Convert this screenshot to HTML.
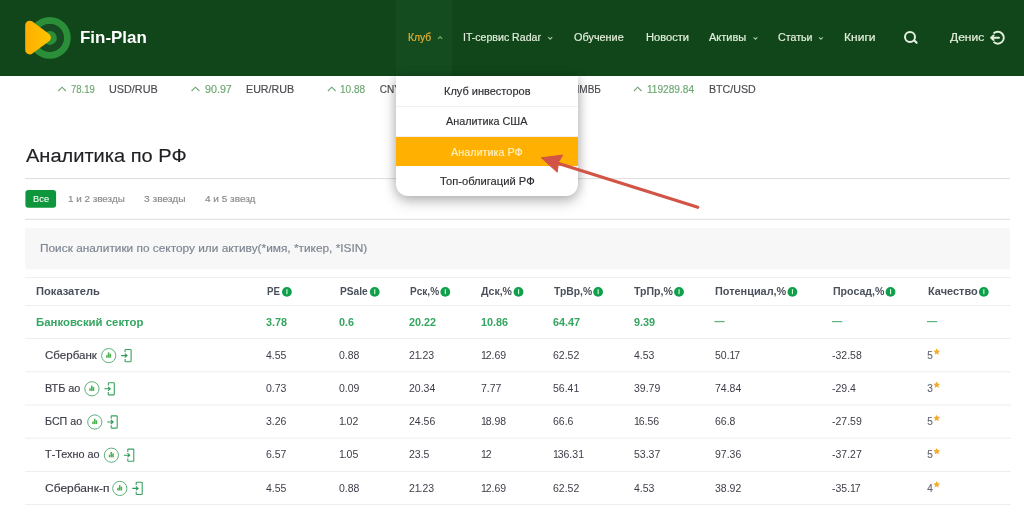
<!DOCTYPE html>
<html><head><meta charset="utf-8"><style>
html,body{margin:0;padding:0;width:1024px;height:514px;overflow:hidden;background:#fff}
body{position:relative;font-family:"Liberation Sans",sans-serif}
.tx{position:absolute;white-space:nowrap;transform-origin:0 0}
#hdr{position:absolute;left:0;top:0;width:1024px;height:76px;background:#11461a}
#hov{position:absolute;left:396px;top:0;width:56px;height:76px;background:#144c20}
#dd{position:absolute;left:396px;top:76px;width:182px;height:120px;background:#fff;border-radius:0 0 12px 12px;box-shadow:0 0 12px rgba(0,0,0,.2),0 6px 14px rgba(0,0,0,.22);z-index:5;overflow:hidden}
#dd .sep{position:absolute;left:0;width:182px;height:1px;background:#f1f1f1}
#dd .or{position:absolute;left:0;top:60.6px;width:182px;height:29.2px;background:#ffb000}
#ddt{position:absolute;left:0;top:0;width:1024px;height:514px;z-index:6;will-change:transform}
svg{position:absolute;left:0;top:0}
#mt{position:absolute;left:0;top:0;width:1024px;height:514px;will-change:transform}
</style></head><body>
<div id="hdr"></div><div id="hov"></div>
<svg width="1024" height="514" viewBox="0 0 1024 514">
<circle cx="49.8" cy="37.9" r="17.4" fill="none" stroke="#2b8f3a" stroke-width="7"/>
<circle cx="49.8" cy="37.9" r="14" fill="#174b21"/>
<circle cx="49.8" cy="37.9" r="7" fill="#2b8f3a"/>
<defs><linearGradient id="lg" gradientUnits="userSpaceOnUse" x1="25" y1="0" x2="51" y2="0"><stop offset="0" stop-color="#ffae00"/><stop offset="1" stop-color="#ffc400"/></linearGradient></defs>
<path d="M29.7 25.2 L46.4 37.6 L29.7 49.9 Z" fill="url(#lg)" stroke="url(#lg)" stroke-width="9" stroke-linejoin="round"/>
<path d="M438.0 38.9 L440.1 36.8 L442.2 38.9" fill="none" stroke="#7fae6a" stroke-width="1.15"/>
<path d="M548.2 37.2 L550.2 39.2 L552.2 37.2" fill="none" stroke="#a8c8a0" stroke-width="1.15"/>
<path d="M753.6 37.3 L755.5 39.2 L757.4 37.3" fill="none" stroke="#a8c8a0" stroke-width="1.1"/>
<path d="M819.0 37.3 L820.9 39.2 L822.8 37.3" fill="none" stroke="#a8c8a0" stroke-width="1.1"/>
<circle cx="910" cy="36.9" r="5" fill="none" stroke="#e4f0de" stroke-width="2"/><path d="M914.6 40.7 L916.6 42.8" stroke="#e4f0de" stroke-width="2.1" stroke-linecap="round"/>
<path d="M993.56 33.46 A6 6 0 1 1 993.56 41.94" fill="none" stroke="#e4f0de" stroke-width="1.9"/><path d="M999 37.7 H991.4 M993.6 35.4 L991.1 37.7 L993.6 40.0" fill="none" stroke="#e4f0de" stroke-width="1.9" stroke-linecap="round" stroke-linejoin="round"/>
<path d="M58.3 91.0 L62.05 87.2 L65.8 91.0" fill="none" stroke="#6ea672" stroke-width="1.1"/>
<path d="M191.6 91.0 L195.45 87.2 L199.29999999999998 91.0" fill="none" stroke="#6ea672" stroke-width="1.1"/>
<path d="M327.9 91.0 L331.75 87.2 L335.6 91.0" fill="none" stroke="#6ea672" stroke-width="1.1"/>
<path d="M633.9 91.0 L637.7 87.2 L641.5 91.0" fill="none" stroke="#6ea672" stroke-width="1.1"/>
<rect x="25" y="178.1" width="985" height="1" fill="#dddddd"/>
<rect x="25" y="218.8" width="985" height="1" fill="#dddddd"/>
<rect x="25" y="277.1" width="986" height="1" fill="#eeeeee"/>
<rect x="25" y="305.0" width="986" height="1" fill="#eeeeee"/>
<rect x="25" y="338.1" width="986" height="1" fill="#eeeeee"/>
<rect x="25" y="371.3" width="986" height="1" fill="#eeeeee"/>
<rect x="25" y="404.5" width="986" height="1" fill="#eeeeee"/>
<rect x="25" y="437.7" width="986" height="1" fill="#eeeeee"/>
<rect x="25" y="470.9" width="986" height="1" fill="#eeeeee"/>
<rect x="25" y="504.1" width="986" height="1" fill="#eeeeee"/>
<rect x="714.4" y="321.1" width="10.2" height="1.1" fill="#4aad72"/>
<rect x="832.0" y="321.1" width="10.2" height="1.1" fill="#4aad72"/>
<rect x="927.0" y="321.1" width="10.2" height="1.1" fill="#4aad72"/>
<rect x="25.4" y="189.9" width="30.7" height="17.8" rx="3" fill="#0e963d"/>
<rect x="25" y="228" width="985" height="41.5" rx="2" fill="#f7f7f7"/>
<circle cx="286.9" cy="291.9" r="4.9" fill="#10a04c"/><rect x="286.4" y="289.2" width="1.1" height="4.9" fill="#d8f8e2"/>
<circle cx="374.7" cy="291.9" r="4.9" fill="#10a04c"/><rect x="374.2" y="289.2" width="1.1" height="4.9" fill="#d8f8e2"/>
<circle cx="445.3" cy="291.9" r="4.9" fill="#10a04c"/><rect x="444.8" y="289.2" width="1.1" height="4.9" fill="#d8f8e2"/>
<circle cx="518.5" cy="291.9" r="4.9" fill="#10a04c"/><rect x="518.0" y="289.2" width="1.1" height="4.9" fill="#d8f8e2"/>
<circle cx="598.1" cy="291.9" r="4.9" fill="#10a04c"/><rect x="597.6" y="289.2" width="1.1" height="4.9" fill="#d8f8e2"/>
<circle cx="679.0" cy="291.9" r="4.9" fill="#10a04c"/><rect x="678.5" y="289.2" width="1.1" height="4.9" fill="#d8f8e2"/>
<circle cx="792.4" cy="291.9" r="4.9" fill="#10a04c"/><rect x="791.9" y="289.2" width="1.1" height="4.9" fill="#d8f8e2"/>
<circle cx="890.5" cy="291.9" r="4.9" fill="#10a04c"/><rect x="890.0" y="289.2" width="1.1" height="4.9" fill="#d8f8e2"/>
<circle cx="983.8" cy="291.9" r="4.9" fill="#10a04c"/><rect x="983.3" y="289.2" width="1.1" height="4.9" fill="#d8f8e2"/>
<circle cx="108.7" cy="355.6" r="7.1" fill="none" stroke="#5cb07c" stroke-width="1"/><rect x="106.10000000000001" y="355.1" width="1.5" height="2.6" fill="#4caf50"/><rect x="107.8" y="352.40000000000003" width="1.6" height="5.3" fill="#4caf50"/><rect x="109.5" y="353.90000000000003" width="1.6" height="3.8" fill="#4caf50"/><path d="M125.10000000000001 352.3 V350.0 Q125.10000000000001 349.5 125.7 349.5 H130.5 Q131.10000000000002 349.5 131.10000000000002 350.1 V361.1 Q131.10000000000002 361.70000000000005 130.5 361.70000000000005 H125.7 Q125.10000000000001 361.70000000000005 125.10000000000001 361.20000000000005 V358.90000000000003" fill="none" stroke="#3aa060" stroke-width="1.1"/><path d="M121.2 355.6 H126.8 M124.8 353.6 L127.0 355.6 L124.8 357.6" fill="none" stroke="#2e9a58" stroke-width="1.1"/>
<circle cx="91.9" cy="388.8" r="7.1" fill="none" stroke="#5cb07c" stroke-width="1"/><rect x="89.30000000000001" y="388.3" width="1.5" height="2.6" fill="#4caf50"/><rect x="91.0" y="385.6" width="1.6" height="5.3" fill="#4caf50"/><rect x="92.7" y="387.1" width="1.6" height="3.8" fill="#4caf50"/><path d="M108.30000000000001 385.5 V383.2 Q108.30000000000001 382.7 108.9 382.7 H113.70000000000002 Q114.30000000000001 382.7 114.30000000000001 383.3 V394.3 Q114.30000000000001 394.90000000000003 113.70000000000002 394.90000000000003 H108.9 Q108.30000000000001 394.90000000000003 108.30000000000001 394.40000000000003 V392.1" fill="none" stroke="#3aa060" stroke-width="1.1"/><path d="M104.4 388.8 H110.0 M108.0 386.8 L110.2 388.8 L108.0 390.8" fill="none" stroke="#2e9a58" stroke-width="1.1"/>
<circle cx="94.8" cy="422.0" r="7.1" fill="none" stroke="#5cb07c" stroke-width="1"/><rect x="92.2" y="421.5" width="1.5" height="2.6" fill="#4caf50"/><rect x="93.89999999999999" y="418.8" width="1.6" height="5.3" fill="#4caf50"/><rect x="95.6" y="420.3" width="1.6" height="3.8" fill="#4caf50"/><path d="M111.2 418.7 V416.4 Q111.2 415.9 111.8 415.9 H116.60000000000001 Q117.2 415.9 117.2 416.5 V427.5 Q117.2 428.1 116.60000000000001 428.1 H111.8 Q111.2 428.1 111.2 427.6 V425.3" fill="none" stroke="#3aa060" stroke-width="1.1"/><path d="M107.3 422.0 H112.89999999999999 M110.89999999999999 420.0 L113.1 422.0 L110.89999999999999 424.0" fill="none" stroke="#2e9a58" stroke-width="1.1"/>
<circle cx="111.4" cy="455.20000000000005" r="7.1" fill="none" stroke="#5cb07c" stroke-width="1"/><rect x="108.80000000000001" y="454.70000000000005" width="1.5" height="2.6" fill="#4caf50"/><rect x="110.5" y="452.00000000000006" width="1.6" height="5.3" fill="#4caf50"/><rect x="112.2" y="453.50000000000006" width="1.6" height="3.8" fill="#4caf50"/><path d="M127.80000000000001 451.90000000000003 V449.6 Q127.80000000000001 449.1 128.4 449.1 H133.20000000000002 Q133.8 449.1 133.8 449.70000000000005 V460.70000000000005 Q133.8 461.30000000000007 133.20000000000002 461.30000000000007 H128.4 Q127.80000000000001 461.30000000000007 127.80000000000001 460.80000000000007 V458.50000000000006" fill="none" stroke="#3aa060" stroke-width="1.1"/><path d="M123.9 455.20000000000005 H129.5 M127.5 453.20000000000005 L129.70000000000002 455.20000000000005 L127.5 457.20000000000005" fill="none" stroke="#2e9a58" stroke-width="1.1"/>
<circle cx="119.8" cy="488.40000000000003" r="7.1" fill="none" stroke="#5cb07c" stroke-width="1"/><rect x="117.2" y="487.90000000000003" width="1.5" height="2.6" fill="#4caf50"/><rect x="118.89999999999999" y="485.20000000000005" width="1.6" height="5.3" fill="#4caf50"/><rect x="120.6" y="486.70000000000005" width="1.6" height="3.8" fill="#4caf50"/><path d="M136.20000000000002 485.1 V482.8 Q136.20000000000002 482.3 136.8 482.3 H141.60000000000002 Q142.20000000000002 482.3 142.20000000000002 482.90000000000003 V493.90000000000003 Q142.20000000000002 494.50000000000006 141.60000000000002 494.50000000000006 H136.8 Q136.20000000000002 494.50000000000006 136.20000000000002 494.00000000000006 V491.70000000000005" fill="none" stroke="#3aa060" stroke-width="1.1"/><path d="M132.3 488.40000000000003 H137.9 M135.9 486.40000000000003 L138.10000000000002 488.40000000000003 L135.9 490.40000000000003" fill="none" stroke="#2e9a58" stroke-width="1.1"/>
<polygon points="936.70,348.30 937.73,350.38 940.03,350.72 938.36,352.34 938.76,354.63 936.70,353.55 934.64,354.63 935.04,352.34 933.37,350.72 935.67,350.38" fill="#f4ab2c"/>
<polygon points="936.70,381.50 937.73,383.58 940.03,383.92 938.36,385.54 938.76,387.83 936.70,386.75 934.64,387.83 935.04,385.54 933.37,383.92 935.67,383.58" fill="#f4ab2c"/>
<polygon points="936.70,414.70 937.73,416.78 940.03,417.12 938.36,418.74 938.76,421.03 936.70,419.95 934.64,421.03 935.04,418.74 933.37,417.12 935.67,416.78" fill="#f4ab2c"/>
<polygon points="936.70,447.90 937.73,449.98 940.03,450.32 938.36,451.94 938.76,454.23 936.70,453.15 934.64,454.23 935.04,451.94 933.37,450.32 935.67,449.98" fill="#f4ab2c"/>
<polygon points="936.70,481.10 937.73,483.18 940.03,483.52 938.36,485.14 938.76,487.43 936.70,486.35 934.64,487.43 935.04,485.14 933.37,483.52 935.67,483.18" fill="#f4ab2c"/>
</svg>
<div id="mt"><div class="tx" style="left:80.20px;top:29px;font-size:17px;line-height:17px;font-weight:700;color:#ffffff;transform:scaleX(0.996)">Fin-Plan</div>
<div class="tx" style="left:407.80px;top:33px;font-size:10.0px;line-height:10.0px;font-weight:400;color:#e6b034;transform:scaleX(1.032);-webkit-text-stroke:0.18px currentColor">Клуб</div>
<div class="tx" style="left:462.80px;top:33px;font-size:10.0px;line-height:10.0px;font-weight:400;color:#e2eedb;transform:scaleX(1.057);-webkit-text-stroke:0.18px currentColor">IT-сервис Radar</div>
<div class="tx" style="left:573.80px;top:33px;font-size:10.0px;line-height:10.0px;font-weight:400;color:#e2eedb;transform:scaleX(1.087);-webkit-text-stroke:0.18px currentColor">Обучение</div>
<div class="tx" style="left:645.60px;top:33px;font-size:10.0px;line-height:10.0px;font-weight:400;color:#e2eedb;transform:scaleX(1.112);-webkit-text-stroke:0.18px currentColor">Новости</div>
<div class="tx" style="left:709.40px;top:33px;font-size:10.0px;line-height:10.0px;font-weight:400;color:#e2eedb;transform:scaleX(1.100);-webkit-text-stroke:0.18px currentColor">Активы</div>
<div class="tx" style="left:778.00px;top:33px;font-size:10.0px;line-height:10.0px;font-weight:400;color:#e2eedb;transform:scaleX(1.065);-webkit-text-stroke:0.18px currentColor">Статьи</div>
<div class="tx" style="left:843.50px;top:33px;font-size:10.0px;line-height:10.0px;font-weight:400;color:#e2eedb;transform:scaleX(1.204);-webkit-text-stroke:0.18px currentColor">Книги</div>
<div class="tx" style="left:949.80px;top:33px;font-size:10.0px;line-height:10.0px;font-weight:400;color:#e2eedb;transform:scaleX(1.206);-webkit-text-stroke:0.18px currentColor">Денис</div>
<div class="tx" style="left:71.00px;top:85px;font-size:10.0px;line-height:10.0px;font-weight:400;color:#6ea672;transform:scaleX(0.954);-webkit-text-stroke:0.15px currentColor">78.19</div>
<div class="tx" style="left:109.40px;top:85px;font-size:10.0px;line-height:10.0px;font-weight:400;color:#4a4a50;transform:scaleX(1.083);-webkit-text-stroke:0.15px currentColor">USD/RUB</div>
<div class="tx" style="left:204.50px;top:85px;font-size:10.0px;line-height:10.0px;font-weight:400;color:#6ea672;transform:scaleX(1.072);-webkit-text-stroke:0.15px currentColor">90.97</div>
<div class="tx" style="left:245.70px;top:85px;font-size:10.0px;line-height:10.0px;font-weight:400;color:#4a4a50;transform:scaleX(1.070);-webkit-text-stroke:0.15px currentColor">EUR/RUB</div>
<div class="tx" style="left:340.20px;top:85px;font-size:10.0px;line-height:10.0px;font-weight:400;color:#6ea672;transform:scaleX(1.005);-webkit-text-stroke:0.15px currentColor">10.88</div>
<div class="tx" style="left:379.80px;top:85px;font-size:10.0px;line-height:10.0px;font-weight:400;color:#4a4a50;-webkit-text-stroke:0.15px currentColor">CNY/RUB</div>
<div class="tx" style="left:535.97px;top:85px;font-size:10.0px;line-height:10.0px;font-weight:400;color:#4a4a50;-webkit-text-stroke:0.15px currentColor">IMOEX/ММВБ</div>
<div class="tx" style="left:647.10px;top:85px;font-size:10.0px;line-height:10.0px;font-weight:400;color:#6ea672;transform:scaleX(1.011);-webkit-text-stroke:0.15px currentColor">119289.84</div>
<div class="tx" style="left:708.70px;top:85px;font-size:10.0px;line-height:10.0px;font-weight:400;color:#4a4a50;transform:scaleX(1.065);-webkit-text-stroke:0.15px currentColor">BTC/USD</div>
<div class="tx" style="left:26.20px;top:147px;font-size:18px;line-height:18px;font-weight:400;color:#1f1f24;transform:scaleX(1.113);-webkit-text-stroke:0.15px currentColor">Аналитика по РФ</div>
<div class="tx" style="left:32.70px;top:195px;font-size:9px;line-height:9px;font-weight:400;color:#ffffff;transform:scaleX(1.039);-webkit-text-stroke:0.05px currentColor">Все</div>
<div class="tx" style="left:68.30px;top:195px;font-size:9px;line-height:9px;font-weight:400;color:#8a8a8e;transform:scaleX(1.095);-webkit-text-stroke:0.15px currentColor">1 и 2 звезды</div>
<div class="tx" style="left:144.00px;top:195px;font-size:9px;line-height:9px;font-weight:400;color:#8a8a8e;transform:scaleX(1.129);-webkit-text-stroke:0.15px currentColor">3 звезды</div>
<div class="tx" style="left:205.00px;top:195px;font-size:9px;line-height:9px;font-weight:400;color:#8a8a8e;transform:scaleX(1.113);-webkit-text-stroke:0.15px currentColor">4 и 5 звезд</div>
<div class="tx" style="left:39.60px;top:244px;font-size:10px;line-height:10px;font-weight:400;color:#7c8591;transform:scaleX(1.185);-webkit-text-stroke:0.15px currentColor">Поиск аналитики по сектору или активу(*имя, *тикер, *ISIN)</div>
<div class="tx" style="left:36.20px;top:287px;font-size:10.0px;line-height:10.0px;font-weight:700;color:#4a505b;transform:scaleX(1.114)">Показатель</div>
<div class="tx" style="left:266.70px;top:287px;font-size:10.0px;line-height:10.0px;font-weight:700;color:#4a505b;transform:scaleX(0.973)">PE</div>
<div class="tx" style="left:339.80px;top:287px;font-size:10.0px;line-height:10.0px;font-weight:700;color:#4a505b;transform:scaleX(1.019)">PSale</div>
<div class="tx" style="left:409.50px;top:287px;font-size:10.0px;line-height:10.0px;font-weight:700;color:#4a505b;transform:scaleX(1.006)">Рск,%</div>
<div class="tx" style="left:481.20px;top:287px;font-size:10.0px;line-height:10.0px;font-weight:700;color:#4a505b;transform:scaleX(1.055)">Дск,%</div>
<div class="tx" style="left:553.60px;top:287px;font-size:10.0px;line-height:10.0px;font-weight:700;color:#4a505b;transform:scaleX(1.037)">ТрВр,%</div>
<div class="tx" style="left:634.00px;top:287px;font-size:10.0px;line-height:10.0px;font-weight:700;color:#4a505b;transform:scaleX(1.057)">ТрПр,%</div>
<div class="tx" style="left:715.20px;top:287px;font-size:10.0px;line-height:10.0px;font-weight:700;color:#4a505b;transform:scaleX(1.090)">Потенциал,%</div>
<div class="tx" style="left:832.90px;top:287px;font-size:10.0px;line-height:10.0px;font-weight:700;color:#4a505b;transform:scaleX(1.059)">Просад,%</div>
<div class="tx" style="left:927.80px;top:287px;font-size:10.0px;line-height:10.0px;font-weight:700;color:#4a505b;transform:scaleX(1.098)">Качество</div>
<div class="tx" style="left:36.30px;top:318px;font-size:10.0px;line-height:10.0px;font-weight:700;color:#35a661;transform:scaleX(1.138)">Банковский сектор</div>
<div class="tx" style="left:266.40px;top:318px;font-size:10.0px;line-height:10.0px;font-weight:700;color:#35a661;transform:scaleX(1.080)">3.78</div>
<div class="tx" style="left:338.80px;top:318px;font-size:10.0px;line-height:10.0px;font-weight:700;color:#35a661;transform:scaleX(1.080)">0.6</div>
<div class="tx" style="left:408.80px;top:318px;font-size:10.0px;line-height:10.0px;font-weight:700;color:#35a661;transform:scaleX(1.080)">20.22</div>
<div class="tx" style="left:481.20px;top:318px;font-size:10.0px;line-height:10.0px;font-weight:700;color:#35a661;transform:scaleX(1.080)">10.86</div>
<div class="tx" style="left:553.40px;top:318px;font-size:10.0px;line-height:10.0px;font-weight:700;color:#35a661;transform:scaleX(1.080)">64.47</div>
<div class="tx" style="left:633.60px;top:318px;font-size:10.0px;line-height:10.0px;font-weight:700;color:#35a661;transform:scaleX(1.080)">9.39</div>
<div class="tx" style="left:45.30px;top:351px;font-size:10.0px;line-height:10.0px;font-weight:400;color:#3c3d48;transform:scaleX(1.153);-webkit-text-stroke:0.15px currentColor">Сбербанк</div>
<div class="tx" style="left:266.40px;top:351px;font-size:10.0px;line-height:10.0px;font-weight:400;color:#3c3d48;transform:scaleX(1.050)">4.55</div>
<div class="tx" style="left:338.80px;top:351px;font-size:10.0px;line-height:10.0px;font-weight:400;color:#3c3d48;transform:scaleX(1.050)">0.88</div>
<div class="tx" style="left:408.80px;top:351px;font-size:10.0px;line-height:10.0px;font-weight:400;color:#3c3d48;transform:scaleX(1.050)">2<span style="letter-spacing:-1.1px">1</span>.23</div>
<div class="tx" style="left:481.20px;top:351px;font-size:10.0px;line-height:10.0px;font-weight:400;color:#3c3d48;transform:scaleX(1.050)"><span style="letter-spacing:-1.1px">1</span>2.69</div>
<div class="tx" style="left:553.40px;top:351px;font-size:10.0px;line-height:10.0px;font-weight:400;color:#3c3d48;transform:scaleX(1.050)">62.52</div>
<div class="tx" style="left:633.60px;top:351px;font-size:10.0px;line-height:10.0px;font-weight:400;color:#3c3d48;transform:scaleX(1.050)">4.53</div>
<div class="tx" style="left:714.80px;top:351px;font-size:10.0px;line-height:10.0px;font-weight:400;color:#3c3d48;transform:scaleX(1.050)">50.<span style="letter-spacing:-1.1px">1</span>7</div>
<div class="tx" style="left:832.20px;top:351px;font-size:10.0px;line-height:10.0px;font-weight:400;color:#3c3d48;transform:scaleX(1.050)">-32.58</div>
<div class="tx" style="left:927.20px;top:351px;font-size:10.0px;line-height:10.0px;font-weight:400;color:#646873;-webkit-text-stroke:0.15px currentColor">5</div>
<div class="tx" style="left:45.30px;top:384px;font-size:10.0px;line-height:10.0px;font-weight:400;color:#3c3d48;transform:scaleX(1.087);-webkit-text-stroke:0.15px currentColor">ВТБ ао</div>
<div class="tx" style="left:266.40px;top:384px;font-size:10.0px;line-height:10.0px;font-weight:400;color:#3c3d48;transform:scaleX(1.050)">0.73</div>
<div class="tx" style="left:338.80px;top:384px;font-size:10.0px;line-height:10.0px;font-weight:400;color:#3c3d48;transform:scaleX(1.050)">0.09</div>
<div class="tx" style="left:408.80px;top:384px;font-size:10.0px;line-height:10.0px;font-weight:400;color:#3c3d48;transform:scaleX(1.050)">20.34</div>
<div class="tx" style="left:481.20px;top:384px;font-size:10.0px;line-height:10.0px;font-weight:400;color:#3c3d48;transform:scaleX(1.050)">7.77</div>
<div class="tx" style="left:553.40px;top:384px;font-size:10.0px;line-height:10.0px;font-weight:400;color:#3c3d48;transform:scaleX(1.050)">56.4<span style="letter-spacing:-1.1px">1</span></div>
<div class="tx" style="left:633.60px;top:384px;font-size:10.0px;line-height:10.0px;font-weight:400;color:#3c3d48;transform:scaleX(1.050)">39.79</div>
<div class="tx" style="left:714.80px;top:384px;font-size:10.0px;line-height:10.0px;font-weight:400;color:#3c3d48;transform:scaleX(1.050)">74.84</div>
<div class="tx" style="left:832.20px;top:384px;font-size:10.0px;line-height:10.0px;font-weight:400;color:#3c3d48;transform:scaleX(1.050)">-29.4</div>
<div class="tx" style="left:927.20px;top:384px;font-size:10.0px;line-height:10.0px;font-weight:400;color:#646873;-webkit-text-stroke:0.15px currentColor">3</div>
<div class="tx" style="left:45.30px;top:417px;font-size:10.0px;line-height:10.0px;font-weight:400;color:#3c3d48;transform:scaleX(1.068);-webkit-text-stroke:0.15px currentColor">БСП ао</div>
<div class="tx" style="left:266.40px;top:417px;font-size:10.0px;line-height:10.0px;font-weight:400;color:#3c3d48;transform:scaleX(1.050)">3.26</div>
<div class="tx" style="left:338.80px;top:417px;font-size:10.0px;line-height:10.0px;font-weight:400;color:#3c3d48;transform:scaleX(1.050)"><span style="letter-spacing:-1.1px">1</span>.02</div>
<div class="tx" style="left:408.80px;top:417px;font-size:10.0px;line-height:10.0px;font-weight:400;color:#3c3d48;transform:scaleX(1.050)">24.56</div>
<div class="tx" style="left:481.20px;top:417px;font-size:10.0px;line-height:10.0px;font-weight:400;color:#3c3d48;transform:scaleX(1.050)"><span style="letter-spacing:-1.1px">1</span>8.98</div>
<div class="tx" style="left:553.40px;top:417px;font-size:10.0px;line-height:10.0px;font-weight:400;color:#3c3d48;transform:scaleX(1.050)">66.6</div>
<div class="tx" style="left:633.60px;top:417px;font-size:10.0px;line-height:10.0px;font-weight:400;color:#3c3d48;transform:scaleX(1.050)"><span style="letter-spacing:-1.1px">1</span>6.56</div>
<div class="tx" style="left:714.80px;top:417px;font-size:10.0px;line-height:10.0px;font-weight:400;color:#3c3d48;transform:scaleX(1.050)">66.8</div>
<div class="tx" style="left:832.20px;top:417px;font-size:10.0px;line-height:10.0px;font-weight:400;color:#3c3d48;transform:scaleX(1.050)">-27.59</div>
<div class="tx" style="left:927.20px;top:417px;font-size:10.0px;line-height:10.0px;font-weight:400;color:#646873;-webkit-text-stroke:0.15px currentColor">5</div>
<div class="tx" style="left:45.30px;top:450px;font-size:10.0px;line-height:10.0px;font-weight:400;color:#3c3d48;transform:scaleX(1.086);-webkit-text-stroke:0.15px currentColor">Т-Техно ао</div>
<div class="tx" style="left:266.40px;top:450px;font-size:10.0px;line-height:10.0px;font-weight:400;color:#3c3d48;transform:scaleX(1.050)">6.57</div>
<div class="tx" style="left:338.80px;top:450px;font-size:10.0px;line-height:10.0px;font-weight:400;color:#3c3d48;transform:scaleX(1.050)"><span style="letter-spacing:-1.1px">1</span>.05</div>
<div class="tx" style="left:408.80px;top:450px;font-size:10.0px;line-height:10.0px;font-weight:400;color:#3c3d48;transform:scaleX(1.050)">23.5</div>
<div class="tx" style="left:481.20px;top:450px;font-size:10.0px;line-height:10.0px;font-weight:400;color:#3c3d48;transform:scaleX(1.050)"><span style="letter-spacing:-1.1px">1</span>2</div>
<div class="tx" style="left:553.40px;top:450px;font-size:10.0px;line-height:10.0px;font-weight:400;color:#3c3d48;transform:scaleX(1.050)"><span style="letter-spacing:-1.1px">1</span>36.3<span style="letter-spacing:-1.1px">1</span></div>
<div class="tx" style="left:633.60px;top:450px;font-size:10.0px;line-height:10.0px;font-weight:400;color:#3c3d48;transform:scaleX(1.050)">53.37</div>
<div class="tx" style="left:714.80px;top:450px;font-size:10.0px;line-height:10.0px;font-weight:400;color:#3c3d48;transform:scaleX(1.050)">97.36</div>
<div class="tx" style="left:832.20px;top:450px;font-size:10.0px;line-height:10.0px;font-weight:400;color:#3c3d48;transform:scaleX(1.050)">-37.27</div>
<div class="tx" style="left:927.20px;top:450px;font-size:10.0px;line-height:10.0px;font-weight:400;color:#646873;-webkit-text-stroke:0.15px currentColor">5</div>
<div class="tx" style="left:45.30px;top:484px;font-size:10.0px;line-height:10.0px;font-weight:400;color:#3c3d48;transform:scaleX(1.200);-webkit-text-stroke:0.15px currentColor">Сбербанк-п</div>
<div class="tx" style="left:266.40px;top:484px;font-size:10.0px;line-height:10.0px;font-weight:400;color:#3c3d48;transform:scaleX(1.050)">4.55</div>
<div class="tx" style="left:338.80px;top:484px;font-size:10.0px;line-height:10.0px;font-weight:400;color:#3c3d48;transform:scaleX(1.050)">0.88</div>
<div class="tx" style="left:408.80px;top:484px;font-size:10.0px;line-height:10.0px;font-weight:400;color:#3c3d48;transform:scaleX(1.050)">2<span style="letter-spacing:-1.1px">1</span>.23</div>
<div class="tx" style="left:481.20px;top:484px;font-size:10.0px;line-height:10.0px;font-weight:400;color:#3c3d48;transform:scaleX(1.050)"><span style="letter-spacing:-1.1px">1</span>2.69</div>
<div class="tx" style="left:553.40px;top:484px;font-size:10.0px;line-height:10.0px;font-weight:400;color:#3c3d48;transform:scaleX(1.050)">62.52</div>
<div class="tx" style="left:633.60px;top:484px;font-size:10.0px;line-height:10.0px;font-weight:400;color:#3c3d48;transform:scaleX(1.050)">4.53</div>
<div class="tx" style="left:714.80px;top:484px;font-size:10.0px;line-height:10.0px;font-weight:400;color:#3c3d48;transform:scaleX(1.050)">38.92</div>
<div class="tx" style="left:832.20px;top:484px;font-size:10.0px;line-height:10.0px;font-weight:400;color:#3c3d48;transform:scaleX(1.050)">-35.<span style="letter-spacing:-1.1px">1</span>7</div>
<div class="tx" style="left:927.20px;top:484px;font-size:10.0px;line-height:10.0px;font-weight:400;color:#646873;-webkit-text-stroke:0.15px currentColor">4</div></div>
<div id="dd"><div class="sep" style="top:29.5px"></div><div class="sep" style="top:59.8px"></div><div class="or"></div></div>
<div id="ddt"><div class="tx" style="left:444.00px;top:87px;font-size:10.0px;line-height:10.0px;font-weight:400;color:#2e2e33;transform:scaleX(1.100);-webkit-text-stroke:0.15px currentColor">Клуб инвесторов</div>
<div class="tx" style="left:446.30px;top:117px;font-size:10.0px;line-height:10.0px;font-weight:400;color:#2e2e33;transform:scaleX(1.080);-webkit-text-stroke:0.15px currentColor">Аналитика США</div>
<div class="tx" style="left:451.20px;top:148px;font-size:10.0px;line-height:10.0px;font-weight:400;color:#fff0c2;transform:scaleX(1.079);-webkit-text-stroke:0.15px currentColor">Аналитика РФ</div>
<div class="tx" style="left:439.80px;top:177px;font-size:10.0px;line-height:10.0px;font-weight:400;color:#2e2e33;transform:scaleX(1.117);-webkit-text-stroke:0.15px currentColor">Топ-облигаций РФ</div></div>
<svg width="1024" height="514" viewBox="0 0 1024 514" style="z-index:10">
<path d="M697.8 207.3 L557 163" stroke="#d15446" stroke-width="3.2" stroke-linecap="round"/>
<path d="M541.3 157.8 L562.7 155.1 L558.5 162 L557.2 172.2 Z" fill="#d15446" stroke="#d15446" stroke-width="1" stroke-linejoin="round"/>
</svg>
</body></html>
